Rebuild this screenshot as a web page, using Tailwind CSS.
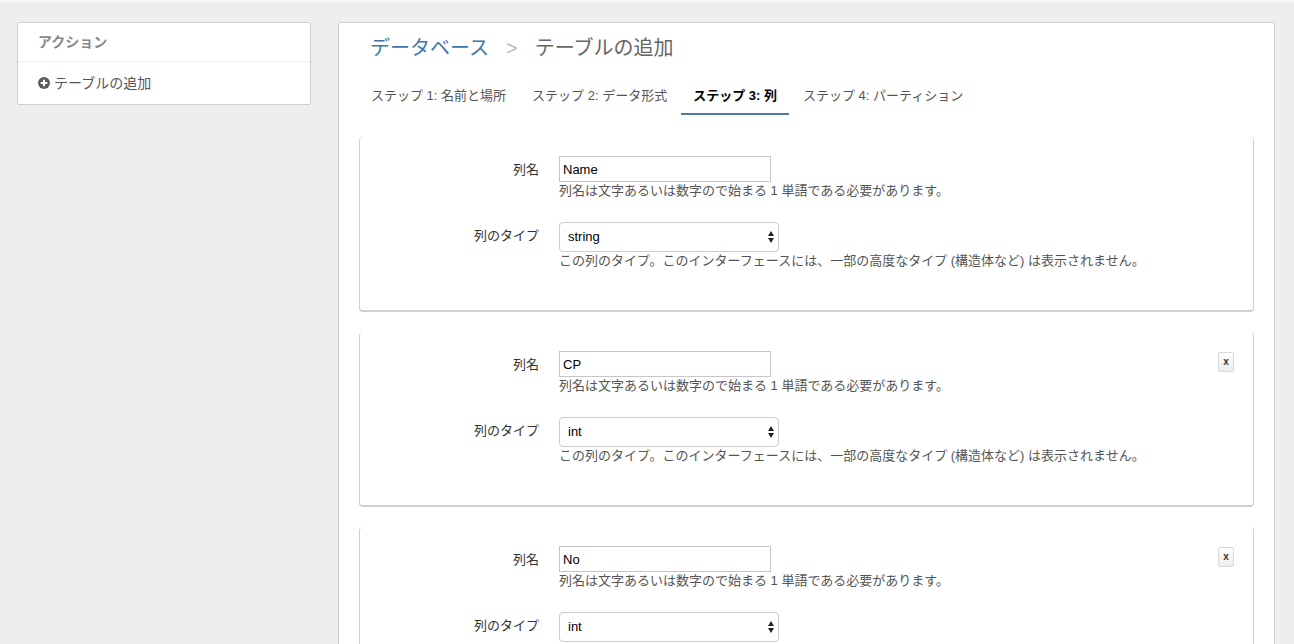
<!DOCTYPE html>
<html lang="ja">
	<head>
		<meta charset="UTF-8" />
		<meta name="viewport" content="width=device-width, initial-scale=1.0" />
		<title>テーブルの追加</title>
		<script src="https://cdn.jsdelivr.net/npm/@tailwindcss/browser@4"></script>
	</head>
	<body
		class="h-screen overflow-hidden border-t-2 border-[#f7f7f7] bg-[#eeeeee] font-['Liberation_Sans','Noto_Sans_CJK_JP',sans-serif] text-[13px] leading-[18px] text-[#333333]"
	>
		<div class="flex items-start gap-[27px] pt-5 pr-[19px] pl-[17px]">
			<!-- Actions -->
			<aside
				class="w-[294px] shrink-0 rounded-xs border border-[#cfcfcf] bg-white text-sm"
			>
				<h2
					class="border-b border-[#eeeeee] px-5 py-[9px] leading-5 font-bold text-[#888888]"
				>
					アクション
				</h2>
				<a
					href="#"
					class="flex items-center gap-1 px-5 py-[11px] leading-5 text-[#555555]"
				>
					<svg class="size-3" viewBox="0 0 12 12" aria-hidden="true">
						<circle cx="6" cy="6" r="6" fill="#5c5c5c" />
						<path d="M6 2.7v6.6M2.7 6h6.6" stroke="#fff" stroke-width="2" />
					</svg>
					テーブルの追加
				</a>
			</aside>

			<main
				class="min-w-0 flex-1 rounded-xs border border-[#cfcfcf] bg-white px-5 pt-[10px] pb-5"
			>
				<!-- Breadcrumb -->
				<h1 class="flex items-center px-[11px] text-xl leading-[30px] text-[#666666]">
					<a href="#" class="text-[#4078ab]">データベース</a>
					<span class="mx-[17px] text-[#bbbbbb]">&gt;</span>
					テーブルの追加
				</h1>

				<!-- Steps -->
				<nav class="mt-[15px] flex gap-[2px] text-[#555555]">
					<a href="#" class="border-b-2 border-transparent px-3 pt-[9px] pb-2"
						>ステップ 1: 名前と場所</a
					>
					<a href="#" class="border-b-2 border-transparent px-3 pt-[9px] pb-2"
						>ステップ 2: データ形式</a
					>
					<a
						href="#"
						aria-current="step"
						class="border-b-2 border-[#5078a0] px-3 pt-[9px] pb-2 font-bold text-black"
						>ステップ 3: 列</a
					>
					<a href="#" class="border-b-2 border-transparent px-3 pt-[9px] pb-2"
						>ステップ 4: パーティション</a
					>
				</nav>

				<!-- Columns -->
				<form class="mt-[22px] flex flex-col gap-5">
					<section
						class="flex items-start justify-between rounded-sm border-x border-b-2 border-[#d0d0d0] pt-[19px] pr-[19px] pb-10"
					>
						<div class="flex flex-col gap-[22px]">
							<div class="flex gap-5">
								<label for="name-1" class="mt-[5px] w-[179px] text-right">列名</label>
								<div>
									<input
										id="name-1"
										type="text"
										value="Name"
										class="block h-[26px] w-[212px] border border-[#c6c6c6] px-[3px] text-black"
									/>
									<p class="text-[#555555]">
										列名は文字あるいは数字ので始まる 1 単語である必要があります。
									</p>
								</div>
							</div>
							<div class="flex gap-5">
								<label for="type-1" class="mt-[5px] w-[179px] text-right"
									>列のタイプ</label
								>
								<div>
									<div class="relative w-[220px]">
										<select
											id="type-1"
											class="block h-[30px] w-full appearance-none rounded border border-[#cccccc] bg-white px-2 text-black"
										>
											<option>string</option>
											<option>int</option>
										</select>
										<svg
											class="pointer-events-none absolute top-[9px] right-1 h-3 w-2"
											viewBox="0 0 8 12"
											fill="#222"
											aria-hidden="true"
										>
											<path d="M4 0l3 5H1zM4 12L1 7h6z" />
										</svg>
									</div>
									<p class="text-[#555555]">
										この列のタイプ。このインターフェースには、一部の高度なタイプ
										(構造体など) は表示されません。
									</p>
								</div>
							</div>
						</div>
					</section>

					<section
						class="flex items-start justify-between rounded-sm border-x border-b-2 border-[#d0d0d0] pt-[19px] pr-[19px] pb-10"
					>
						<div class="flex flex-col gap-[22px]">
							<div class="flex gap-5">
								<label for="name-2" class="mt-[5px] w-[179px] text-right">列名</label>
								<div>
									<input
										id="name-2"
										type="text"
										value="CP"
										class="block h-[26px] w-[212px] border border-[#c6c6c6] px-[3px] text-black"
									/>
									<p class="text-[#555555]">
										列名は文字あるいは数字ので始まる 1 単語である必要があります。
									</p>
								</div>
							</div>
							<div class="flex gap-5">
								<label for="type-2" class="mt-[5px] w-[179px] text-right"
									>列のタイプ</label
								>
								<div>
									<div class="relative w-[220px]">
										<select
											id="type-2"
											class="block h-[30px] w-full appearance-none rounded border border-[#cccccc] bg-white px-2 text-black"
										>
											<option>int</option>
											<option>string</option>
										</select>
										<svg
											class="pointer-events-none absolute top-[9px] right-1 h-3 w-2"
											viewBox="0 0 8 12"
											fill="#222"
											aria-hidden="true"
										>
											<path d="M4 0l3 5H1zM4 12L1 7h6z" />
										</svg>
									</div>
									<p class="text-[#555555]">
										この列のタイプ。このインターフェースには、一部の高度なタイプ
										(構造体など) は表示されません。
									</p>
								</div>
							</div>
						</div>
						<button
							type="button"
							class="mt-px h-5 w-4 rounded-xs border border-[#d8d8d8] bg-linear-to-b from-white to-[#ededed] text-[10px] leading-[18px] font-bold text-[#333333]"
						>
							x
						</button>
					</section>

					<section
						class="flex items-start justify-between rounded-sm border-x border-b-2 border-[#d0d0d0] pt-[19px] pr-[19px] pb-10"
					>
						<div class="flex flex-col gap-[22px]">
							<div class="flex gap-5">
								<label for="name-3" class="mt-[5px] w-[179px] text-right">列名</label>
								<div>
									<input
										id="name-3"
										type="text"
										value="No"
										class="block h-[26px] w-[212px] border border-[#c6c6c6] px-[3px] text-black"
									/>
									<p class="text-[#555555]">
										列名は文字あるいは数字ので始まる 1 単語である必要があります。
									</p>
								</div>
							</div>
							<div class="flex gap-5">
								<label for="type-3" class="mt-[5px] w-[179px] text-right"
									>列のタイプ</label
								>
								<div>
									<div class="relative w-[220px]">
										<select
											id="type-3"
											class="block h-[30px] w-full appearance-none rounded border border-[#cccccc] bg-white px-2 text-black"
										>
											<option>int</option>
											<option>string</option>
										</select>
										<svg
											class="pointer-events-none absolute top-[9px] right-1 h-3 w-2"
											viewBox="0 0 8 12"
											fill="#222"
											aria-hidden="true"
										>
											<path d="M4 0l3 5H1zM4 12L1 7h6z" />
										</svg>
									</div>
								</div>
							</div>
						</div>
						<button
							type="button"
							class="mt-px h-5 w-4 rounded-xs border border-[#d8d8d8] bg-linear-to-b from-white to-[#ededed] text-[10px] leading-[18px] font-bold text-[#333333]"
						>
							x
						</button>
					</section>
				</form>
			</main>
		</div>
	</body>
</html>
